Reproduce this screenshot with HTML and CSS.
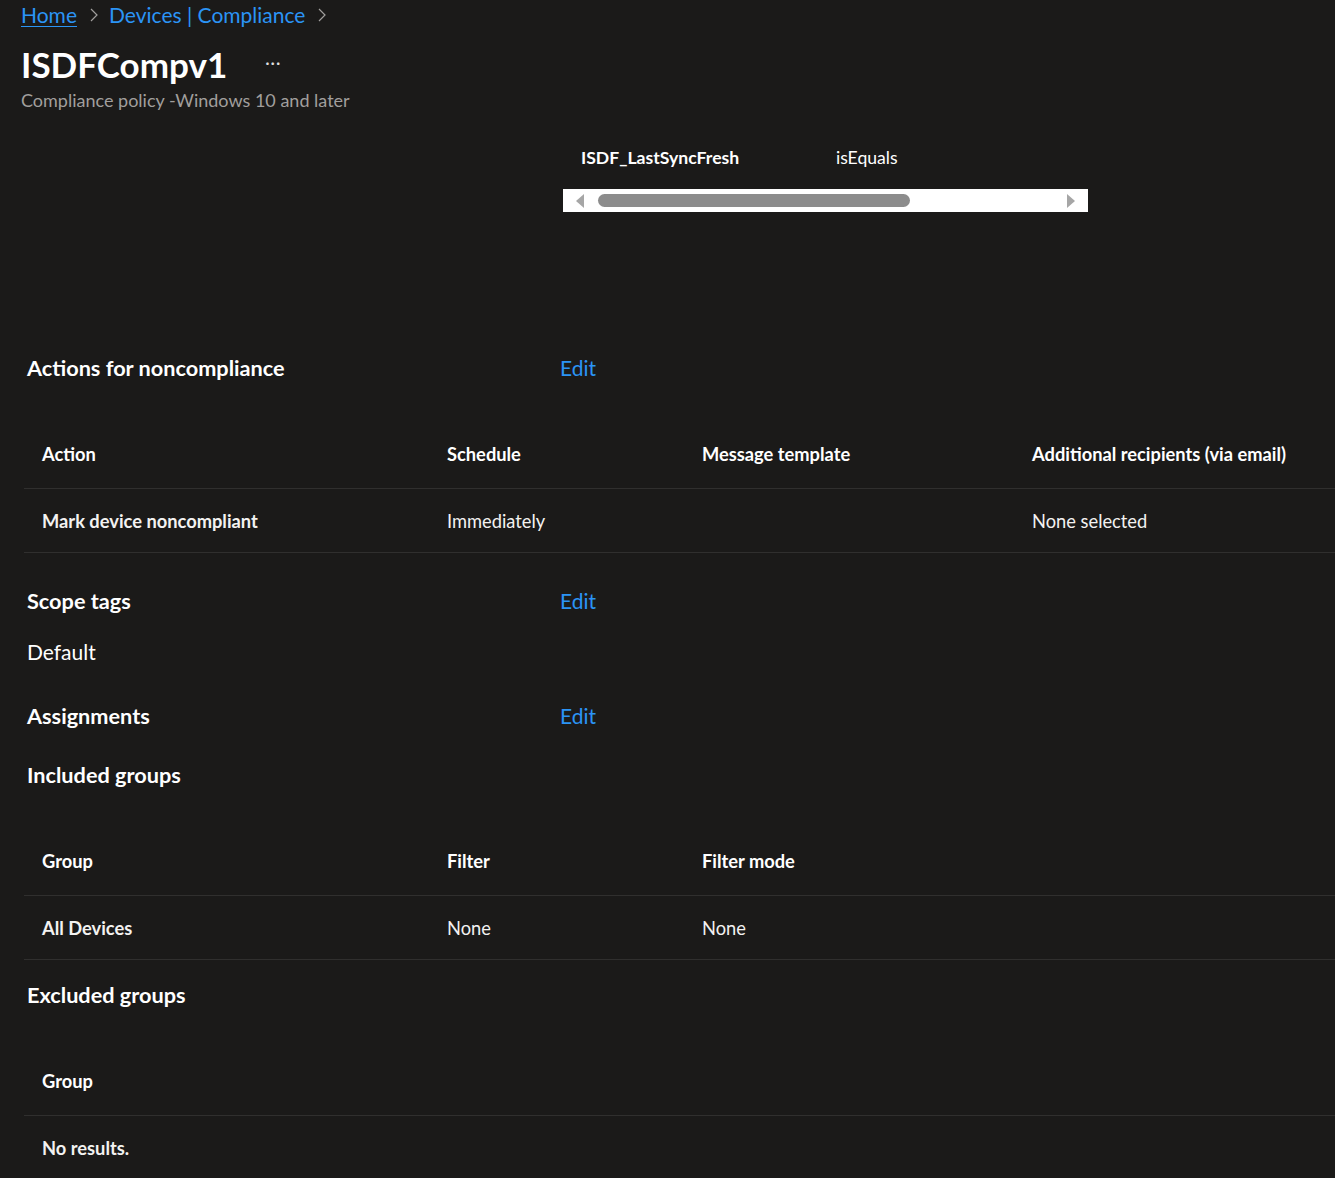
FILE: index.html
```html
<!DOCTYPE html>
<html lang="en">
<head>
<meta charset="utf-8">
<title>ISDFCompv1</title>
<link rel="stylesheet" href="styles.css">
</head>
<body>
<header class="page-head">
  <nav class="crumbs">
    <a class="crumb crumb-home" href="#">Home</a>
    <svg class="chev" width="10" height="16" viewBox="0 0 10 16"><path d="M2 2 L8 8 L2 14" fill="none" stroke="#a19f9d" stroke-width="1.2"/></svg>
    <a class="crumb" href="#">Devices | Compliance</a>
    <svg class="chev" width="10" height="16" viewBox="0 0 10 16"><path d="M2 2 L8 8 L2 14" fill="none" stroke="#a19f9d" stroke-width="1.2"/></svg>
  </nav>
  <div class="title-row">
    <h1 class="title">ISDFCompv1</h1>
    <span class="more">···</span>
  </div>
  <div class="subtitle">Compliance policy -Windows 10 and later</div>
</header>

<section class="settings-frag">
  <div class="frag-row">
    <span class="frag-name">ISDF_LastSyncFresh</span>
    <span class="frag-op">isEquals</span>
  </div>
  <div class="hscroll">
    <svg class="arrow" width="10" height="14" viewBox="0 0 10 14"><path d="M9 0 L9 14 L1 7 Z" fill="#a6a6a6"/></svg>
    <div class="track"><div class="thumb"></div></div>
    <svg class="arrow" width="10" height="14" viewBox="0 0 10 14"><path d="M1 0 L1 14 L9 7 Z" fill="#a6a6a6"/></svg>
  </div>
</section>

<section class="block block-actions">
  <div class="sec-head">
    <h2 class="sec-title">Actions for noncompliance</h2>
    <a class="edit" href="#">Edit</a>
  </div>
  <div class="grid grid-actions">
    <div class="row row-head">
      <div class="cell">Action</div>
      <div class="cell">Schedule</div>
      <div class="cell">Message template</div>
      <div class="cell">Additional recipients (via email)</div>
    </div>
    <div class="row">
      <div class="cell strong">Mark device noncompliant</div>
      <div class="cell">Immediately</div>
      <div class="cell"></div>
      <div class="cell">None selected</div>
    </div>
  </div>
</section>

<section class="block block-scope">
  <div class="sec-head">
    <h2 class="sec-title">Scope tags</h2>
    <a class="edit" href="#">Edit</a>
  </div>
  <div class="plain">Default</div>
</section>

<section class="block block-assign">
  <div class="sec-head">
    <h2 class="sec-title">Assignments</h2>
    <a class="edit" href="#">Edit</a>
  </div>
  <h3 class="sub-title sub-included">Included groups</h3>
  <div class="grid grid-groups">
    <div class="row row-head">
      <div class="cell">Group</div>
      <div class="cell">Filter</div>
      <div class="cell">Filter mode</div>
      <div class="cell"></div>
    </div>
    <div class="row">
      <div class="cell strong">All Devices</div>
      <div class="cell">None</div>
      <div class="cell">None</div>
      <div class="cell"></div>
    </div>
  </div>
  <h3 class="sub-title sub-excluded">Excluded groups</h3>
  <div class="grid grid-excluded">
    <div class="row row-head">
      <div class="cell">Group</div>
    </div>
    <div class="row row-last">
      <div class="cell strong">No results.</div>
    </div>
  </div>
</section>
</body>
</html>
```

FILE: styles.css
```css
html, body {
  margin: 0;
  padding: 0;
  background: #1b1a19;
}
body {
  font-family: Lato, "Open Sans", "Noto Sans", sans-serif;
  color: #ffffff;
  width: 1335px;
  min-height: 1178px;
  overflow: hidden;
}
a { text-decoration: none; }

.page-head {
  padding-left: 21px;
}
.crumbs {
  display: flex;
  align-items: center;
  height: 30px;
  font-size: 21px;
  line-height: 30px;
}
.crumb {
  color: #2b94f5;
}
.crumb-home {
  text-decoration: underline;
  text-underline-offset: 3px;
  text-decoration-thickness: 1px;
}
.chev {
  margin: 0 10px 0 12px;
}
.title-row {
  display: flex;
  align-items: center;
  margin-top: 12px;
  height: 44px;
}
.title {
  margin: 0;
  font-size: 35px;
  font-weight: 700;
  line-height: 44px;
}
.more {
  margin-left: 38px;
  font-size: 17px;
  color: #e0e0e0;
  letter-spacing: 1px;
  position: relative;
  top: -2px;
}
.subtitle {
  margin-top: 2px;
  font-size: 18px;
  line-height: 24px;
  color: #a19f9d;
}

.settings-frag {
  margin-top: 28px;
  margin-left: 563px;
  width: 525px;
}
.frag-row {
  display: grid;
  grid-template-columns: 255px 1fr;
  padding-left: 18px;
  height: 34px;
  align-items: center;
  font-size: 17.6px;
}
.frag-name { font-weight: 700; }
.frag-op { font-weight: 400; }
.hscroll {
  margin-top: 15px;
  height: 23px;
  background: #ffffff;
  display: flex;
  align-items: center;
  padding: 0 12px 0 12px;
  gap: 13px;
}
.track {
  flex: 1;
  height: 13px;
  display: flex;
}
.thumb {
  width: 312px;
  height: 13px;
  border-radius: 7px;
  background: #8c8c8c;
}

.block-actions { margin-top: 142px; }
.block-scope { margin-top: 34px; }
.block-assign { margin-top: 36px; }

.sec-head {
  display: grid;
  grid-template-columns: 533px auto;
  padding-left: 27px;
  height: 28px;
  align-items: center;
}
.sec-title {
  margin: 0;
  font-size: 21.7px;
  font-weight: 700;
  line-height: 28px;
}
.edit {
  color: #2b94f5;
  font-size: 21px;
  line-height: 28px;
  justify-self: start;
}
.plain {
  margin-top: 23px;
  padding-left: 27px;
  font-size: 21px;
  line-height: 28px;
}
.sub-title {
  margin: 0;
  padding-left: 27px;
  font-size: 21.7px;
  font-weight: 700;
  line-height: 28px;
}
.sub-included { margin-top: 31px; }
.sub-excluded { margin-top: 21px; }

.grid {
  margin-left: 24px;
  margin-top: 38px;
}
.row {
  display: grid;
  grid-template-columns: 405px 255px 330px 1fr;
  height: 63px;
  align-items: center;
  border-bottom: 1px solid #302f2e;
  font-size: 18.3px;
  color: #f3f2f1;
}
.row-head {
  height: 68px;
  font-weight: 700;
  color: #ffffff;
}
.row-last { border-bottom: none; }
.cell {
  padding-left: 18px;
  white-space: nowrap;
}
.strong { font-weight: 700; }
```
